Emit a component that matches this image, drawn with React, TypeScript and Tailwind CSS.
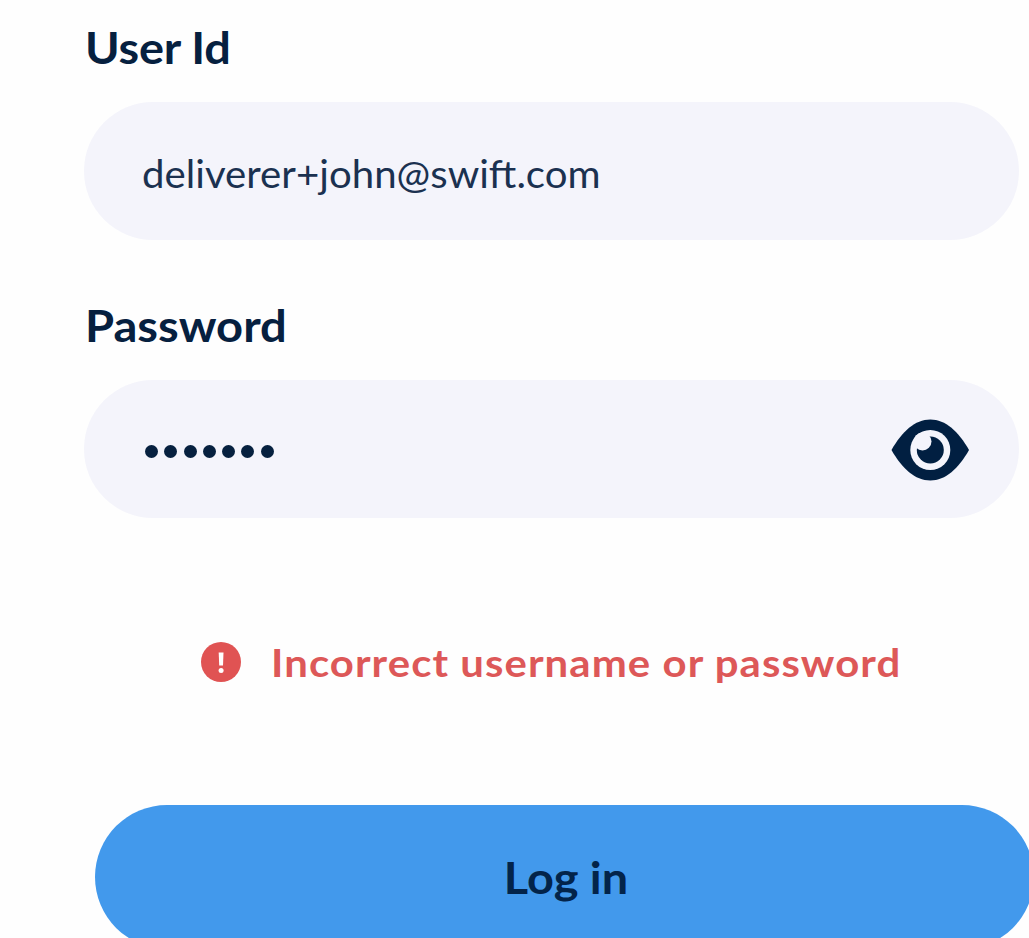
import { useState } from "react";

function EyeIcon() {
  return (
    <svg viewBox="0 0 78 62" className="h-[62px] w-[78px]" aria-hidden="true">
      <path
        d="M.5 31C11 12.500 24 .5 39.300 .5S67.500 12.500 78 31C67.500 49.500 54.600 61.500 39.300 61.500S11 49.500 .5 31Z"
        fill="#011f41"
      />
      <circle cx="39.300" cy="31" r="20" fill="#f4f4fb" />
      <circle cx="39.300" cy="31" r="13.500" fill="#011f41" />
      <circle cx="31.500" cy="22.500" r="9" fill="#f4f4fb" />
    </svg>
  );
}

function AlertIcon() {
  return (
    <svg viewBox="0 0 40 40" className="h-10 w-10 shrink-0" aria-hidden="true">
      <circle cx="20" cy="20" r="20" fill="#e05353" />
      <path d="M17.700 10.500h4.800l-.5 13h-3.800z" fill="#fff" />
      <circle cx="20.100" cy="28.500" r="2.500" fill="#fff" />
    </svg>
  );
}

export default function App() {
  const [visible, setVisible] = useState(false);
  return (
    <main className="h-[938px] w-full overflow-hidden bg-[#fefefe] pl-[84px] font-['Lato',sans-serif] text-[#06203f]">
      <form className="flex w-[950px] flex-col" onSubmit={(e) => e.preventDefault()}>
        <div className="flex h-[102px] items-start pt-[22px] pl-px">
          <span className="origin-left scale-x-[1.09] text-[43px] leading-[52px] font-bold tracking-[-0.2px]">
            User Id
          </span>
        </div>
        <div className="flex h-[138px] w-[935px] items-center rounded-full bg-[#f4f4fb] pl-[58px]">
          <span className="mt-[3px] origin-left scale-x-[1.058] text-[38px] leading-[48px] text-[#1b3150]">
            deliverer+john@swift.com
          </span>
        </div>
        <div className="flex h-[140px] items-start pt-[60px] pl-px">
          <span className="origin-left scale-x-[1.095] text-[43px] leading-[52px] font-bold">
            Password
          </span>
        </div>
        <div className="flex h-[138px] w-[935px] items-center justify-between rounded-full bg-[#f4f4fb] pr-[49px] pl-[61px]">
          <div className="mt-[5px] flex gap-[6.300px]">
            {Array.from({ length: 7 }, (_, i) => (
              <span key={i} className="h-[13px] w-[13px] rounded-full bg-[#06203f]" />
            ))}
          </div>
          <button
            type="button"
            aria-label="Show password"
            aria-pressed={visible}
            onClick={() => setVisible(!visible)}
            className="mt-px mr-px"
          >
            <EyeIcon />
          </button>
        </div>
        <div className="mt-[118px] flex h-[52px] items-center gap-[30px] pl-[117px] text-[#dd5858]">
          <AlertIcon />
          <span className="origin-left scale-x-[1.074] text-[39px] leading-[52px] font-bold tracking-[1px] whitespace-nowrap">
            Incorrect username or password
          </span>
        </div>
        <button
          type="submit"
          className="mt-[117px] ml-[11px] flex h-[144px] w-[939px] items-center justify-center rounded-full bg-[#4299ec] pt-0.5 pl-[3px] text-[43px] leading-[52px] font-bold text-[#03244a]"
        >
          <span className="scale-x-[1.09]">Log in</span>
        </button>
      </form>
    </main>
  );
}
